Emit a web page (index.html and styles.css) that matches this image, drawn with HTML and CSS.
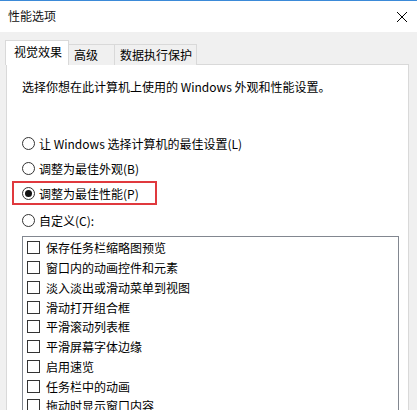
FILE: index.html
```html
<!DOCTYPE html>
<html lang="zh-CN">
<head>
    <meta charset="UTF-8">
    <title>性能选项</title>
    <link rel="stylesheet" href="styles.css">
</head>
<body>
    <div class="titlebar">
        <span class="title">性能选项</span>
        <svg class="close" width="12" height="12" viewBox="0 0 12 12">
            <path d="M1 1 L11 11 M11 1 L1 11" stroke="#000" stroke-width="1"/>
        </svg>
    </div>
    <div class="dialog">
        <div class="tabs">
            <div class="tab active">视觉效果</div>
            <div class="tab tab-adv">高级</div>
            <div class="tab tab-dep">数据执行保护</div>
        </div>
        <div class="panel">
            <p class="intro">选择你想在此计算机上使用的 Windows 外观和性能设置。</p>
            <div class="options">
                <div class="radio-row"><span class="radio"></span>让 Windows 选择计算机的最佳设置(L)</div>
                <div class="radio-row"><span class="radio"></span>调整为最佳外观(B)</div>
                <div class="radio-row highlight"><span class="radio checked"></span>调整为最佳性能(P)</div>
                <div class="radio-row custom"><span class="radio"></span>自定义(C):</div>
            </div>
            <div class="listbox">
                <div class="check-row"><span class="checkbox"></span>保存任务栏缩略图预览</div>
                <div class="check-row"><span class="checkbox"></span>窗口内的动画控件和元素</div>
                <div class="check-row"><span class="checkbox"></span>淡入淡出或滑动菜单到视图</div>
                <div class="check-row"><span class="checkbox"></span>滑动打开组合框</div>
                <div class="check-row"><span class="checkbox"></span>平滑滚动列表框</div>
                <div class="check-row"><span class="checkbox"></span>平滑屏幕字体边缘</div>
                <div class="check-row"><span class="checkbox"></span>启用速览</div>
                <div class="check-row"><span class="checkbox"></span>任务栏中的动画</div>
                <div class="check-row"><span class="checkbox"></span>拖动时显示窗口内容</div>
            </div>
        </div>
    </div>
</body>
</html>
```

FILE: styles.css
```css
html, body {
    margin: 0;
    height: 410px;
    overflow: hidden;
}
body {
    font-family: "Noto Sans CJK SC", "Microsoft YaHei", sans-serif;
    font-size: 12px;
    color: #000;
    background-color: #f0f0f0;
}
.titlebar {
    height: 31px;
    border-top: 1px solid #3b8ad8;
    background: #fff;
    display: flex;
    align-items: center;
    justify-content: space-between;
    padding: 0 9px 0 8px;
}
.title {
    color: #111;
    margin-top: -2px;
}
.close {
    display: block;
}
.dialog {
    padding: 9px 8px 0 5px;
}
.tabs {
    display: flex;
    align-items: flex-end;
    height: 24px;
    margin-bottom: -1px;
    position: relative;
    z-index: 1;
}
.tab {
    box-sizing: border-box;
    height: 21px;
    line-height: 20px;
    border: 1px solid #d9d9d9;
    border-bottom: none;
    background: #f0f0f0;
    padding-left: 5px;
}
.tab.active {
    width: 64px;
    height: 25px;
    line-height: 22px;
    background: #fff;
    padding-left: 8px;
}
.tab-adv {
    width: 46px;
    border-left: none;
}
.tab-dep {
    width: 82px;
    border-left: none;
}
.panel {
    margin-left: 1px;
    height: 360px;
    background: #fff;
    border: 1px solid #d9d9d9;
    padding: 14px 13px 0 15px;
}
.intro {
    margin: 0;
    line-height: 16px;
}
.options {
    margin-top: 36px;
}
.radio-row {
    display: flex;
    align-items: center;
    height: 25px;
    white-space: nowrap;
}
.radio {
    box-sizing: border-box;
    width: 13px;
    height: 13px;
    border: 1px solid #333;
    border-radius: 50%;
    margin-right: 4px;
    display: flex;
    align-items: center;
    justify-content: center;
}
.radio.checked::after {
    content: "";
    width: 7px;
    height: 7px;
    border-radius: 50%;
    background: #111;
}
.highlight {
    box-sizing: border-box;
    width: 145px;
    height: 24px;
    margin-left: -10px;
    padding-left: 8px;
    border: 2px solid #e0393e;
}
.custom {
    margin-top: 3px;
}
.listbox {
    margin-top: 3px;
    width: 371px;
    height: 200px;
    border: 1px solid #828790;
    padding: 1px 0 0 4px;
}
.check-row {
    display: flex;
    align-items: center;
    height: 19.75px;
    white-space: nowrap;
}
.checkbox {
    box-sizing: border-box;
    width: 13px;
    height: 13px;
    border: 1px solid #333;
    margin-right: 6px;
}
```
